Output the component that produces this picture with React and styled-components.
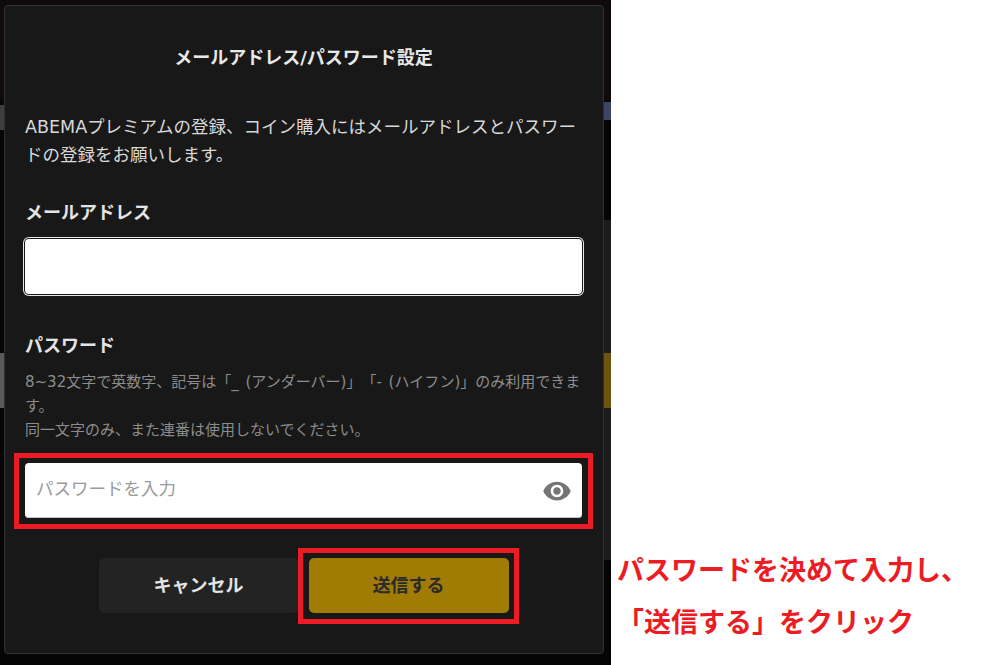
import React from 'react'
import styled, { createGlobalStyle } from 'styled-components'

const GlobalStyle = createGlobalStyle`
  html, body {
    margin: 0;
    padding: 0;
    background: #fff;
  }
  body {
    font-family: "DejaVu Sans", "Noto Sans CJK JP", sans-serif;
  }
`

const Page = styled.div`
  width: 997px;
  height: 665px;
  display: flex;
  overflow: hidden;
  background: #fff;
`

const Backdrop = styled.div`
  flex: none;
  width: 611px;
  height: 665px;
  box-sizing: border-box;
  padding: 5px 7px 11px 4px;
  background:
    linear-gradient(#5a5a5a, #5a5a5a) 0 353px / 4px 55px no-repeat,
    linear-gradient(#3e3e3e, #3e3e3e) 0 105px / 4px 25px no-repeat,
    linear-gradient(#6b5510, #6b5510) 100% 353px / 7px 55px no-repeat,
    linear-gradient(#3c4468, #3c4468) 100% 102px / 7px 18px no-repeat,
    linear-gradient(#1a1c1e, #1a1c1e) 100% 220px / 7px 340px no-repeat,
    linear-gradient(#100a0c, #100a0c) 0 0 / 100% 100px no-repeat,
    #060506;
`

const Modal = styled.section`
  position: relative;
  height: 649px;
  box-sizing: border-box;
  padding: 0 21px 0 20px;
  background: #181818;
  border: 1px solid #323232;
  border-radius: 4px;
`

const Title = styled.h1`
  margin: 0;
  padding-top: 40px;
  font-size: 18px;
  line-height: 24px;
  font-weight: 700;
  text-align: center;
  color: #e8e8e8;
`

const Lead = styled.p`
  margin: 43px 0 0;
  font-size: 17.5px;
  line-height: 28px;
  color: #d8d8d8;
`

const Label = styled.h2`
  margin: ${(p) => p.$top}px 0 0;
  font-size: 18px;
  line-height: 26px;
  font-weight: 700;
  color: #e4e4e4;
`

const Field = styled.div`
  display: flex;
  align-items: center;
  justify-content: space-between;
  box-sizing: border-box;
  height: 55px;
  margin-top: ${(p) => p.$top}px;
  padding: 0 10px 0 11px;
  background: #fff;
  border-radius: 4px;
  box-shadow: ${(p) => (p.$focused ? '0 0 0 1px #181818, 0 0 0 2px #e8e8e8' : 'inset 0 -1px 0 #c4c4c4')};
`

const Input = styled.input`
  flex: 1;
  min-width: 0;
  border: 0;
  outline: 0;
  padding: 0 0 4px;
  background: transparent;
  font-family: inherit;
  font-size: 17.5px;
  color: #222;

  &::placeholder {
    color: #9a9a9a;
    opacity: 1;
  }
`

const Hint = styled.p`
  margin: 11px 0 0;
  font-size: 15px;
  line-height: 24px;
  word-spacing: 2px;
  text-spacing-trim: space-all;
  color: #8c8c8c;
`

const Actions = styled.div`
  display: flex;
  justify-content: center;
  gap: 10px;
  margin-top: 40px;
`

const Button = styled.button`
  width: 200px;
  height: 55px;
  padding: 0 0 3px;
  border: 0;
  border-radius: 5px;
  font-family: inherit;
  font-size: 18px;
  font-weight: 700;
  color: ${(p) => (p.$primary ? '#2a2a2a' : '#e4e4e4')};
  background: ${(p) => (p.$primary ? '#a07c05' : '#232323')};
`

const Highlight = styled.div`
  position: absolute;
  box-sizing: border-box;
  border: 5px solid #ed1c24;
  pointer-events: none;
  left: ${(p) => p.$left}px;
  top: ${(p) => p.$top}px;
  width: ${(p) => p.$width}px;
  height: ${(p) => p.$height}px;
`

const Note = styled.aside`
  flex: 1;
  padding: 545px 0 0 6px;
  font-size: 27px;
  line-height: 52px;
  font-weight: 700;
  color: #ed1c24;
`

const NoteLine = styled.div`
  white-space: nowrap;
`

const EyeIcon = () => (
  <svg width="30" height="30" viewBox="0 0 24 24" fill="#757575" aria-hidden="true">
    <path d="M12 4.5C7 4.5 2.73 7.61 1 12c1.73 4.39 6 7.5 11 7.5s9.27-3.11 11-7.5c-1.73-4.39-6-7.5-11-7.5zM12 17c-2.76 0-5-2.24-5-5s2.24-5 5-5 5 2.24 5 5-2.24 5-5 5zm0-8c-1.66 0-3 1.34-3 3s1.34 3 3 3 3-1.34 3-3-1.34-3-3-3z" />
  </svg>
)

const App = () => (
  <Page>
    <GlobalStyle />
    <Backdrop>
      <Modal>
        <Title>メールアドレス/パスワード設定</Title>
        <Lead>ABEMAプレミアムの登録、コイン購入にはメールアドレスとパスワードの登録をお願いします。</Lead>
        <Label $top={31}>メールアドレス</Label>
        <Field $top={13} $focused>
          <Input type="text" />
        </Field>
        <Label $top={39}>パスワード</Label>
        <Hint>
          8~32文字で英数字、記号は「_ (アンダーバー)」「- (ハイフン)」のみ利用できます。
          <br />
          同一文字のみ、また連番は使用しないでください。
        </Hint>
        <Field $top={21}>
          <Input type="text" placeholder="パスワードを入力" />
          <EyeIcon />
        </Field>
        <Actions>
          <Button>キャンセル</Button>
          <Button $primary>送信する</Button>
        </Actions>
        <Highlight $left={9} $top={447} $width={579} $height={76} />
        <Highlight $left={293} $top={542} $width={221} $height={76} />
      </Modal>
    </Backdrop>
    <Note>
      <NoteLine>パスワードを決めて入力し、</NoteLine>
      <NoteLine>「送信する」をクリック</NoteLine>
    </Note>
  </Page>
)

export default App
